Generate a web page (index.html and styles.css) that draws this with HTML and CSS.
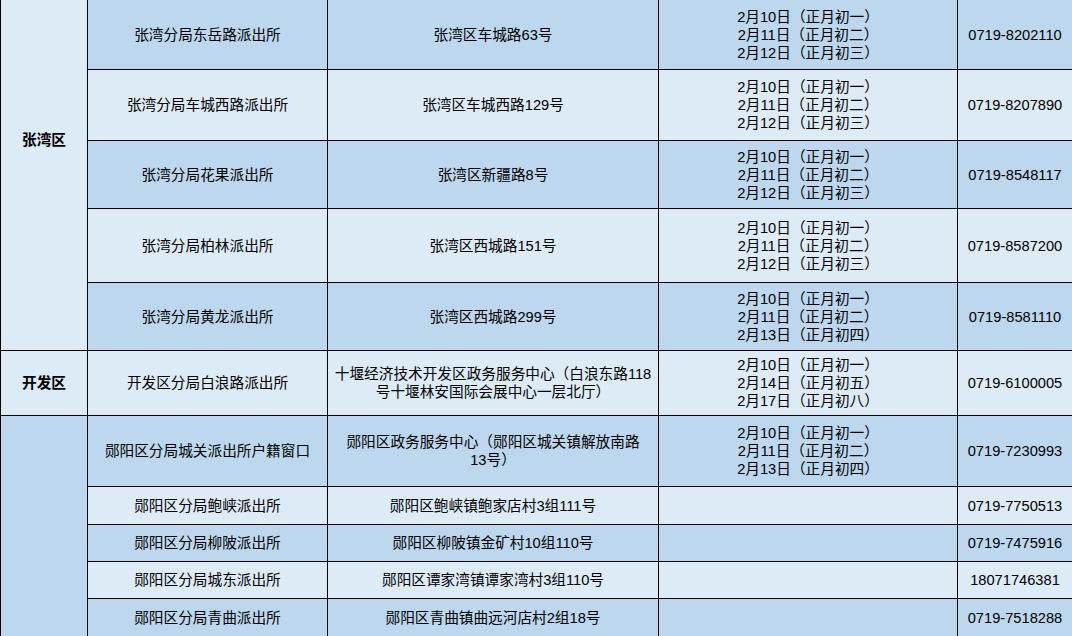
FILE: index.html
```html
<!DOCTYPE html>
<html lang="zh-CN">
<head>
<meta charset="utf-8">
<title>派出所户籍窗口值班表</title>
<link rel="stylesheet" href="styles.css">
</head>
<body>
<div class="sheet">
<table class="grid">
  <colgroup>
    <col class="c-area"><col class="c-name"><col class="c-addr"><col class="c-date"><col class="c-tel">
  </colgroup>
  <tbody>
    <tr class="r1 dark">
      <td class="area light area-zw" rowspan="5">张湾区</td>
      <td>张湾分局东岳路派出所</td>
      <td>张湾区车城路63号</td>
      <td>2月10日（正月初一）<br>2月11日（正月初二）<br>2月12日（正月初三）</td>
      <td class="tel">0719-8202110</td>
    </tr>
    <tr class="r2 light">
      <td>张湾分局车城西路派出所</td>
      <td>张湾区车城西路129号</td>
      <td>2月10日（正月初一）<br>2月11日（正月初二）<br>2月12日（正月初三）</td>
      <td class="tel">0719-8207890</td>
    </tr>
    <tr class="r3 dark">
      <td>张湾分局花果派出所</td>
      <td>张湾区新疆路8号</td>
      <td>2月10日（正月初一）<br>2月11日（正月初二）<br>2月12日（正月初三）</td>
      <td class="tel">0719-8548117</td>
    </tr>
    <tr class="r4 light">
      <td>张湾分局柏林派出所</td>
      <td>张湾区西城路151号</td>
      <td>2月10日（正月初一）<br>2月11日（正月初二）<br>2月12日（正月初三）</td>
      <td class="tel">0719-8587200</td>
    </tr>
    <tr class="r5 dark">
      <td>张湾分局黄龙派出所</td>
      <td>张湾区西城路299号</td>
      <td>2月10日（正月初一）<br>2月11日（正月初二）<br>2月13日（正月初四）</td>
      <td class="tel">0719-8581110</td>
    </tr>
    <tr class="r6 light">
      <td class="area light">开发区</td>
      <td>开发区分局白浪路派出所</td>
      <td>十堰经济技术开发区政务服务中心（白浪东路118<br>号十堰林安国际会展中心一层北厅）</td>
      <td>2月10日（正月初一）<br>2月14日（正月初五）<br>2月17日（正月初八）</td>
      <td class="tel">0719-6100005</td>
    </tr>
    <tr class="r7 dark">
      <td class="area dark" rowspan="5"></td>
      <td>郧阳区分局城关派出所户籍窗口</td>
      <td>郧阳区政务服务中心（郧阳区城关镇解放南路<br>13号）</td>
      <td>2月10日（正月初一）<br>2月11日（正月初二）<br>2月13日（正月初四）</td>
      <td class="tel">0719-7230993</td>
    </tr>
    <tr class="r8 light">
      <td>郧阳区分局鲍峡派出所</td>
      <td>郧阳区鲍峡镇鲍家店村3组111号</td>
      <td></td>
      <td class="tel">0719-7750513</td>
    </tr>
    <tr class="r9 dark">
      <td>郧阳区分局柳陂派出所</td>
      <td>郧阳区柳陂镇金矿村10组110号</td>
      <td></td>
      <td class="tel">0719-7475916</td>
    </tr>
    <tr class="r10 light">
      <td>郧阳区分局城东派出所</td>
      <td>郧阳区谭家湾镇谭家湾村3组110号</td>
      <td></td>
      <td class="tel">18071746381</td>
    </tr>
    <tr class="r11 dark">
      <td>郧阳区分局青曲派出所</td>
      <td>郧阳区青曲镇曲远河店村2组18号</td>
      <td></td>
      <td class="tel">0719-7518288</td>
    </tr>
  </tbody>
</table>
</div>
</body>
</html>
```

FILE: styles.css
```css
html, body {
  margin: 0;
  padding: 0;
  overflow: hidden;
  background: #ffffff;
}

.sheet {
  width: 1072px;
  height: 636px;
  overflow: hidden;
}

.grid {
  border-collapse: collapse;
  table-layout: fixed;
  width: 1076px;
  margin-top: -1px;
  font-family: "Liberation Sans", "Noto Sans CJK SC", sans-serif;
  font-size: 14.67px;
  line-height: 18px;
  color: #000;
}

.c-area { width: 87px; }
.c-name { width: 240px; }
.c-addr { width: 331px; }
.c-date { width: 299px; }
.c-tel  { width: 119px; }

.grid td {
  border: 1px solid #000;
  text-align: center;
  vertical-align: middle;
  padding: 0 2px;
  white-space: nowrap;
  overflow: hidden;
}

.dark td { background: #bdd7ee; }
.light td { background: #ddebf7; }
.grid td.area.light { background: #ddebf7; }
.grid td.area.dark { background: #bdd7ee; }

.grid td.area {
  font-weight: bold;
}

.grid td.area-zw {
  padding-bottom: 70px;
}

.grid td.tel {
  padding-right: 6px;
}

.r1 td { height: 69px; }
.r2 td { height: 70px; }
.r3 td { height: 67px; }
.r4 td { height: 73px; }
.r5 td { height: 67px; }
.r6 td { height: 64px; }
.r7 td { height: 70px; }
.r8 td { height: 37px; }
.r9 td { height: 36px; }
.r10 td { height: 36px; }
.r11 td { height: 37px; }
```
